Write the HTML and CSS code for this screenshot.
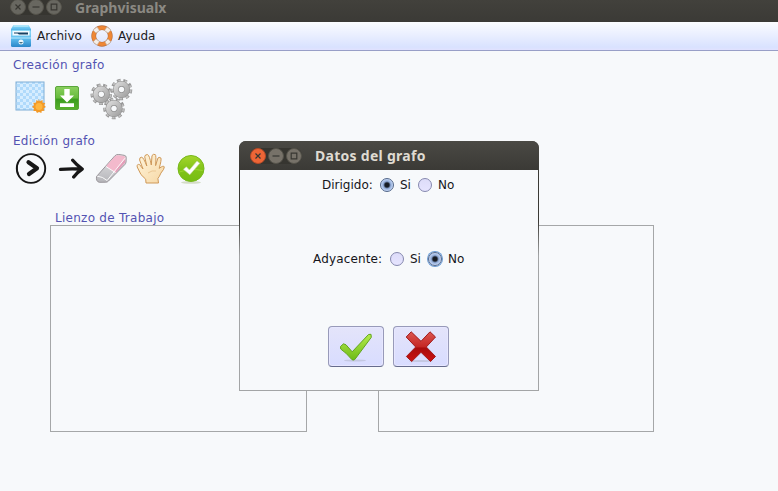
FILE: index.html
```
<!DOCTYPE html>
<html lang="es">
<head>
<meta charset="utf-8">
<title>Graphvisualx</title>
<link rel="stylesheet" href="styles.css">
</head>
<body>
<svg class="defs" width="0" height="0">
  <defs>
    <linearGradient id="blue" x2="0" y2="1"><stop stop-color="#8fdcf8"/><stop offset=".5" stop-color="#5fbdee"/><stop offset="1" stop-color="#2a86c9"/></linearGradient>
    <linearGradient id="green" x2="0" y2="1"><stop stop-color="#8bd05f"/><stop offset=".5" stop-color="#66bb3c"/><stop offset=".55" stop-color="#3b9c1f"/><stop offset="1" stop-color="#58b22b"/></linearGradient>
    <linearGradient id="lime" x2="0" y2="1"><stop stop-color="#a4d62c"/><stop offset=".5" stop-color="#83c41a"/><stop offset="1" stop-color="#76bd13"/></linearGradient>
    <linearGradient id="check" x2="0" y2="1"><stop stop-color="#b5ec4c"/><stop offset="1" stop-color="#6dba18"/></linearGradient>
    <linearGradient id="red" x2="0" y2="1"><stop stop-color="#dc5550"/><stop offset=".5" stop-color="#c52825"/><stop offset=".55" stop-color="#a90d0d"/><stop offset="1" stop-color="#cb1111"/></linearGradient>
    <linearGradient id="skin" x2="1" y2="1"><stop stop-color="#fff5dc"/><stop offset="1" stop-color="#f6d7a4"/></linearGradient>
    <linearGradient id="steel" x2="1" y2="1"><stop stop-color="#d8d8d8"/><stop offset="1" stop-color="#a4a4a4"/></linearGradient>
    <linearGradient id="rubber" x2="0" y2="1"><stop stop-color="#e4e4e6"/><stop offset="1" stop-color="#b6b6ba"/></linearGradient>
    <pattern id="squares" width="6" height="6" patternUnits="userSpaceOnUse"><rect width="6" height="6" fill="#d6edff"/><path d="M0 0h3v3H0zM3 3h3v3H3z" fill="#b0dafb"/></pattern>
    <g id="gear">
      <circle r="9.2" fill="none" stroke="#979797" stroke-width="3.2" stroke-dasharray="3.6 2.822"/>
      <circle r="9" fill="none" stroke="#c0c0c0" stroke-width="2.2" stroke-dasharray="2.4 4.022" stroke-dashoffset="-.6"/>
      <circle r="5.700" fill="none" stroke="#8f8f8f" stroke-width="5.800"/>
      <circle r="5.700" fill="none" stroke="url(#steel)" stroke-width="4.600"/>
    </g>
  </defs>
</svg>
<header class="titlebar">
  <span class="ctl">
    <svg class="wb" viewBox="0 0 16 16"><circle cx="8" cy="8" r="7.5"/><path d="M5.5 5.5l5 5m0-5l-5 5"/></svg>
    <svg class="wb" viewBox="0 0 16 16"><circle cx="8" cy="8" r="7.5"/><path d="M4.5 8h7"/></svg>
    <svg class="wb" viewBox="0 0 16 16"><circle cx="8" cy="8" r="7.5"/><path d="M5.2 5.2h5.6v5.6H5.2z"/></svg>
  </span>
  <span class="wtitle">Graphvisualx</span>
</header>
<nav class="menubar">
  <svg width="22" height="24" viewBox="0 0 22 24"><path d="M3.5 1h15l2.5 4v4H1V5z" fill="url(#blue)"/><path d="M3.5 2h15" stroke="#d7f5fe"/><rect x="1" y="6" width="20" height="17" rx="1.5" fill="url(#blue)"/><rect x="2.5" y="7" width="17" height="4.500" fill="#f4fbff"/><path d="M4 8.500h14v2H9L7.500 9.500H4z" fill="#174264"/><path d="M1 14h20" stroke="#b9e8fc"/><circle cx="11" cy="18" r="2.500" fill="#eef8fd"/><path d="M9 18q2 3 4 0" fill="#497287"/></svg>
  <span class="m1">Archivo</span>
  <svg width="22" height="22" viewBox="0 0 22 22"><circle cx="11" cy="11" r="8.300" fill="none" stroke="#b87243" stroke-width="4.800"/><circle cx="11" cy="11" r="8.300" fill="none" stroke="#ef8735" stroke-width="3.600"/><path d="M2 5l4-3 2.500 3.500L5 8zM16 2l4 3-3 3-3.500-2.500zM2 17l3-3 3.500 2.500L6 20zM14 17l3-3 3 3-4 3z" fill="#f5eee8" stroke="#b7afa8" stroke-width=".6"/></svg>
  <span class="m2">Ayuda</span>
</nav>
<main>
  <h2 class="h1">Creación grafo</h2>
  <div class="tools create">
    <svg width="32" height="32" viewBox="0 0 32 32"><rect x="2" y="1" width="28" height="28" fill="url(#squares)" stroke="#7eaed6"/><path d="M24.500 18l1.400 2.300L28.500 19l.2 2.700 2.600.2-1.200 2.400L32 26l-2.400 1.300.8 2.500-2.700.1-.3 2.100-2.400-1-2 1-1.100-2.100-2.500.1.6-2.600-2-1.600 2-1.600-.7-2.400 2.700-.1.4-2.600 2.100 1.200z" fill="#f39a27"/><circle cx="25" cy="25.500" r="3.500" fill="#ffb63e"/></svg>
    <svg class="dl" width="24" height="25" viewBox="0 0 24 25"><rect x=".5" y=".5" width="23" height="23" rx="1.500" fill="url(#green)" stroke="#5aa63b"/><path d="M9.300 3h5.400v6.500h4.300L12 16.500 5 9.500h4.300zM5 17.300h14V21H5z" fill="#fff"/></svg>
    <svg class="gears" width="44" height="43" viewBox="0 0 44 43"><use href="#gear" transform="translate(11.300 17.300)"/><use href="#gear" transform="translate(31.500 12.500)"/><use href="#gear" transform="translate(24 31.500)"/></svg>
  </div>
  <h2 class="h2">Edición grafo</h2>
  <div class="tools edit">
    <svg width="32" height="32" viewBox="0 0 32 32"><ellipse cx="16" cy="15.500" rx="14.200" ry="14.400" fill="none" stroke="#171717" stroke-width="1.900"/><path d="M3 9Q.8 16 4 23" fill="none" stroke="#171717" stroke-width="1.200"/><path d="M13.500 9.300L22 15.200 14 21" fill="none" stroke="#171717" stroke-width="4.200" stroke-linecap="round" stroke-linejoin="round"/></svg>
    <svg class="arrow" width="27" height="22" viewBox="0 0 27 22"><path d="M2.500 11.300q9-.8 20-.3M14.700 2.300q3.400 4.200 9.500 8.700-5.200 3.400-8.500 8" fill="none" stroke="#171717" stroke-width="3.300" stroke-linecap="round" stroke-linejoin="round"/></svg>
    <svg class="eraser" width="33" height="31" viewBox="0 0 33 31"><path d="M1.500 23.500L19.700 3q1.600-1.800 4-1.500l5.500.8q2 .4 2 2l-.2 4.800q-.1 1.300-1.200 2.500L13.500 28q-1 1.200-2.700 1.200l-6.500.1q-3.400-.7-2.800-5.800z" fill="url(#rubber)" stroke="#99959a" stroke-linejoin="round"/><path d="M11 13.300L20.200 3.100Q21.800 1.900 23.500 2.200l5.500.9q1.500.5 1.400 1.500l-.2 4.500-9.700 10.800z" fill="#f3b9cc"/><path d="M20.500 16.700l9.700-10.800v3.700l-9.500 10.300z" fill="#e39fb9"/><path d="M2.300 23.200q5.200.3 9.800 4.300L30 5.200M10.800 13.400l9.700 6.200" stroke="#fff" stroke-width=".9" fill="none"/></svg>
    <svg class="hand" width="30" height="31" viewBox="0 0 30 31"><path d="M10 30l-.3-3.800Q4.500 23 1.200 14q-.5-3.300 2.400-2.400L7 16 3.600 7q-.3-3 2.200-2.800Q7.500 4.500 10.800 13L8.700 3.800q.2-2.500 2.800-2.200Q13.500 2 15.300 12l.7-9.400q1.200-2 3.300-1 1 .6.300 11l2.300-7.500q1-1.400 2.900-.2 1 1.500-1.600 10.500 4.400-3.400 5.100-1.500.3 1.800-3.400 6.200-1.600 3.800-3 5.400L22.500 30z" fill="url(#skin)" stroke="#cf9959" stroke-width="1" stroke-linejoin="round"/><path d="M12 20q4-3 8-2" fill="none" stroke="#ebc794"/></svg>
    <svg class="ok" width="28" height="30" viewBox="0 0 28 30"><ellipse cx="14" cy="27.500" rx="10" ry="1.300" fill="#d4dcc7"/><circle cx="14" cy="13.500" r="13" fill="url(#lime)" stroke="#77b81a"/><path d="M2.300 17Q14 13 25.700 15.500" fill="none" stroke="#9bd530"/><path d="M6.400 14.300l3-2.500 3 3.200L20 6l2.800 2.300-10 11.400z" fill="#fff" stroke="#c4d8a5" stroke-width=".6"/></svg>
  </div>
  <h2 class="h3">Lienzo de Trabajo</h2>
  <div class="panels"><section></section><section></section></div>
</main>
<div class="dialog">
  <div class="dbar">
    <span class="ctl">
      <svg class="wb close" viewBox="0 0 16 16"><circle cx="8" cy="8" r="7.5"/><path d="M5.5 5.5l5 5m0-5l-5 5"/></svg>
      <svg class="wb" viewBox="0 0 16 16"><circle cx="8" cy="8" r="7.5"/><path d="M4.5 8h7"/></svg>
      <svg class="wb" viewBox="0 0 16 16"><circle cx="8" cy="8" r="7.5"/><path d="M5.2 5.2h5.6v5.6H5.2z"/></svg>
    </span>
    <span class="wtitle">Datos del grafo</span>
  </div>
  <div class="dbody">
    <div class="row r1"><span class="l1">Dirigido:</span><i class="radio on"></i><span class="si">Si</span><i class="radio"></i><span class="no">No</span></div>
    <div class="row r2"><span class="l2">Adyacente:</span><i class="radio"></i><span class="si">Si</span><i class="radio on focus"></i><span class="no">No</span></div>
    <div class="btns">
      <button><svg width="34" height="30" viewBox="0 0 34 30"><ellipse cx="16" cy="28.500" rx="11" ry="1" fill="#c4c8e2"/><path d="M1.500 14.500l3-2.700 2.500 1 6.200 7L29.500 2.500l2.500-.2.300 3L15.800 27.500q-1.700 1.200-3 0Q7 20.500 1.700 17z" fill="url(#check)" stroke="#62a51e"/></svg></button>
      <button><svg width="34" height="32" viewBox="0 0 34 32"><ellipse cx="17" cy="30" rx="12" ry="1" fill="#c4c8e2"/><path d="M2.200 6L7.200.8 17 10.300 26 .8 31.500 6l-9.200 10 9.200 9.500-5 5L17 21.300l-9.300 9.200-5.300-5L11.700 16z" fill="url(#red)" stroke="#a11b1b"/></svg></button>
    </div>
  </div>
</div>
</body>
</html>
```
FILE: styles.css
```
* { box-sizing: border-box; }
body { margin: 0; width: 778px; height: 491px; overflow: hidden; background: #f7f9fb; color: #1c1c22; font: 12px/16px "DejaVu Sans", sans-serif; }
svg { display: block; flex: none; }
.defs { position: absolute; }
.titlebar { height: 22px; display: flex; align-items: flex-start; padding-left: 10px; background: linear-gradient(#42413c, #3b3a36); }
.titlebar .ctl { margin-top: -1px; }
.ctl { display: flex; gap: 2px; width: 52px; border-radius: 8px; background: #363530; flex: none; }
.wb { width: 16px; height: 16px; }
.wb circle { fill: #777269; stroke: #55534b; }
.wb path { fill: none; stroke: #383732; stroke-width: 1.2; }
.wb.close circle { fill: #ed6536; stroke: #b44b29; }
.titlebar .wb circle { fill: #686760; }
.wtitle { font: bold 14px/16px "Noto Sans", sans-serif; color: #dfdbd2; white-space: nowrap; letter-spacing: .28px; }
.titlebar .wtitle { color: #8b8983; margin-left: 13px; letter-spacing: 0; }
.menubar { height: 29px; border-bottom: 1px solid #989fc7; background: linear-gradient(#fbfcff, #d9e2ff 90%, #e1e2ff); display: flex; align-items: center; padding-left: 10px; }
.m1 { width: 45px; margin: 0 9px 0 5px; }
.m2 { margin-left: 5px; letter-spacing: .1px; }
main { display: flex; flex-direction: column; }
h2 { margin: 0; font: 12px/16px "DejaVu Sans", sans-serif; letter-spacing: .27px; color: #5353b2; }
.h1 { margin: 6px 0 0 13px; }
.tools { display: flex; align-items: flex-start; }
.create { height: 59px; padding: 8px 0 0 14px; }
.dl { margin: 5px 0 0 9px; }
.gears { margin: -4px 0 0 11px; }
.h2 { margin: 1px 0 0 13px; }
.edit { height: 61px; padding: 4px 0 0 15px; }
.arrow { margin: 5px 0 0 11px; }
.eraser { margin: 0 0 0 10px; }
.hand { margin: 0 0 0 8px; }
.ok { margin: 2px 0 0 11px; }
.h3 { margin-left: 55px; height: 15px; line-height: 16px; }
.panels { display: flex; gap: 71px; margin-left: 50px; }
.panels section { width: 257px; height: 207px; border: 1px solid #a5a7a8; }
.panels section + section { width: 276px; }
.dialog { position: absolute; left: 239px; top: 141px; width: 300px; height: 250px; border-radius: 7px 7px 0 0; background: linear-gradient(#3b3a36 80px, #a3a5a6 115px); padding: 0 1px 1px; color: #15151a; }
.dbar { height: 29px; margin: 0 -1px; border-radius: 7px 7px 0 0; background: linear-gradient(#4a4944, #3b3a36); display: flex; align-items: center; padding-left: 11px; }
.dbar .wtitle { margin-left: 13px; }
.dbody { height: 220px; background: #f7f9fb; padding-top: 7px; }
.row { display: flex; align-items: center; height: 16px; white-space: nowrap; }
.r1 { padding-left: 82px; }
.r2 { margin-top: 58px; padding-left: 73px; }
.l1 { width: 51px; margin-right: 7px; }
.l2 { width: 70px; margin-right: 7px; letter-spacing: .15px; }
.radio { width: 14px; height: 14px; border: 1px solid #8588ae; border-radius: 50%; background: linear-gradient(#dddcf9, #e6e4ff); }
.radio.on { border-color: #536789; background: radial-gradient(circle, #171c24 0 2px, #8fa9d5 3.7px, #c9dbfa 6px); }
.radio.focus { box-shadow: 0 0 0 1px #6a9bd5; }
.si { width: 12px; margin: 0 6px; }
.no { margin-left: 6px; }
.btns { display: flex; gap: 9px; margin: 59px 0 0 88px; }
button { width: 56px; height: 41px; padding: 0; border: 1px solid #989ab9; border-bottom-color: #666c8d; border-radius: 4px; background: linear-gradient(#e4e4fa, #d8dcff); box-shadow: inset 0 0 0 1px #e7e7ff; display: flex; align-items: center; justify-content: center; }
```
